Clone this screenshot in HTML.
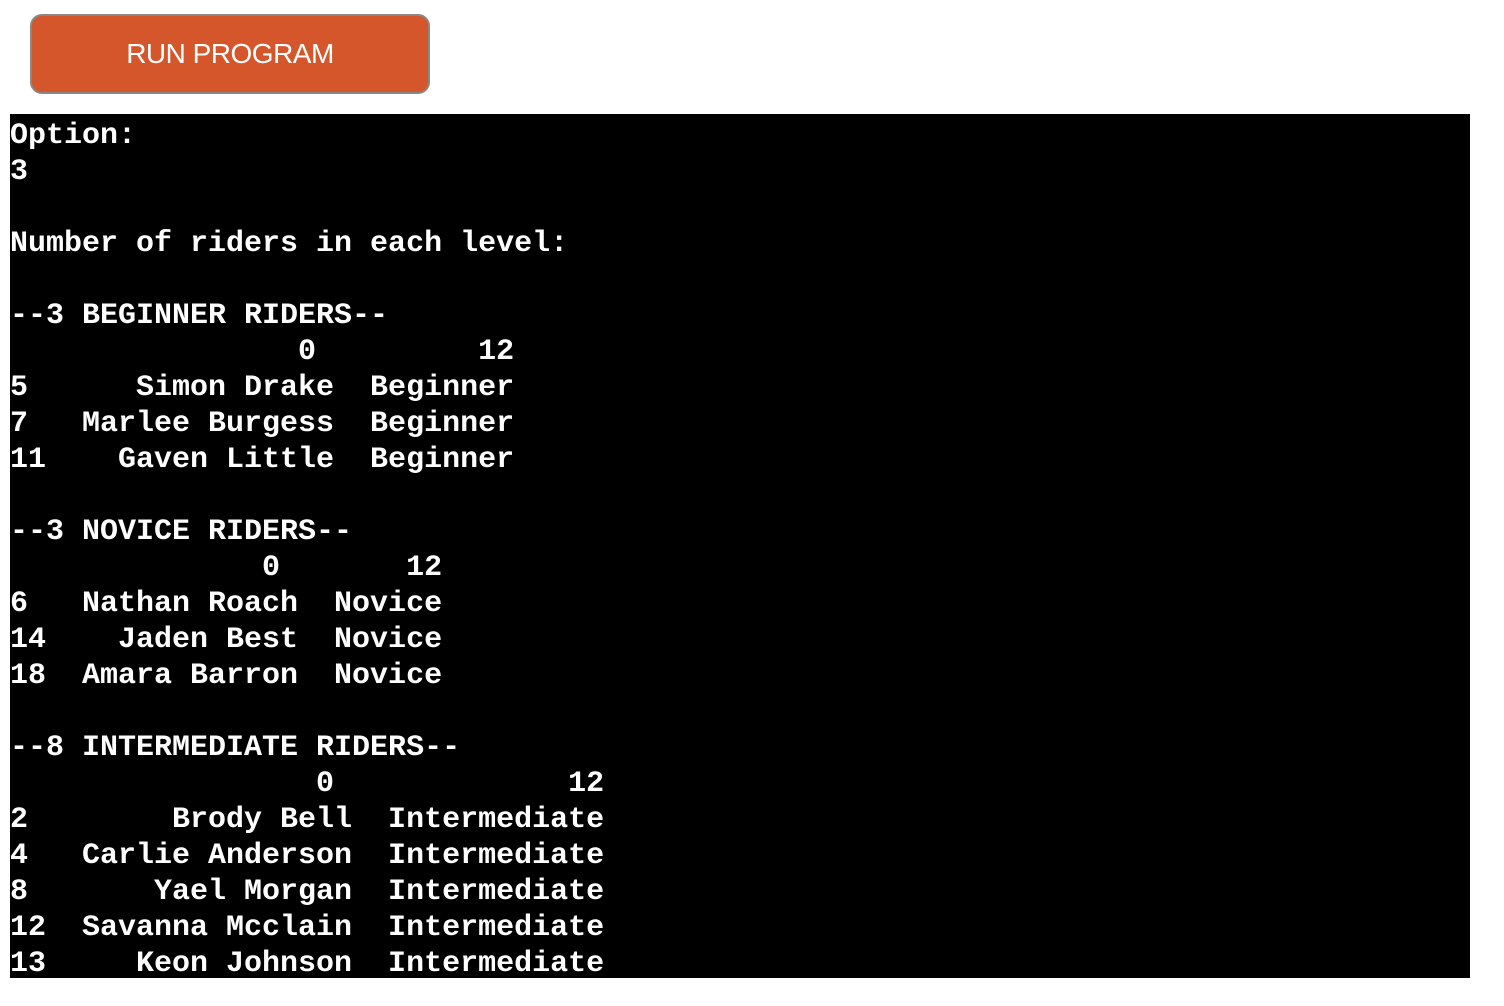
<!DOCTYPE html>
<html><head><style>
html,body{margin:0;padding:0;background:#fff;width:1504px;height:1006px;overflow:hidden}
.btn{position:absolute;left:30px;top:14px;width:396px;height:76px;background:#d6562b;border:2px solid #888;border-radius:12px;color:#fff;font:28px "Liberation Sans",Arial,sans-serif;text-align:center;line-height:76px;letter-spacing:-0.5px}
.out{position:absolute;left:10px;top:114px;width:1460px;height:864px;background:#000;overflow:hidden}
pre{margin:0;padding-top:4px;color:#fff;font:bold 30px/36px "Liberation Mono","Courier New",monospace;white-space:pre}
</style></head><body>
<div class="btn">RUN PROGRAM</div>
<div class="out"><pre>Option:
3

Number of riders in each level:

--3 BEGINNER RIDERS--
                0         12
5      Simon Drake  Beginner
7   Marlee Burgess  Beginner
11    Gaven Little  Beginner

--3 NOVICE RIDERS--
              0       12
6   Nathan Roach  Novice
14    Jaden Best  Novice
18  Amara Barron  Novice

--8 INTERMEDIATE RIDERS--
                 0             12
2        Brody Bell  Intermediate
4   Carlie Anderson  Intermediate
8       Yael Morgan  Intermediate
12  Savanna Mcclain  Intermediate
13     Keon Johnson  Intermediate
</pre></div>
</body></html>
